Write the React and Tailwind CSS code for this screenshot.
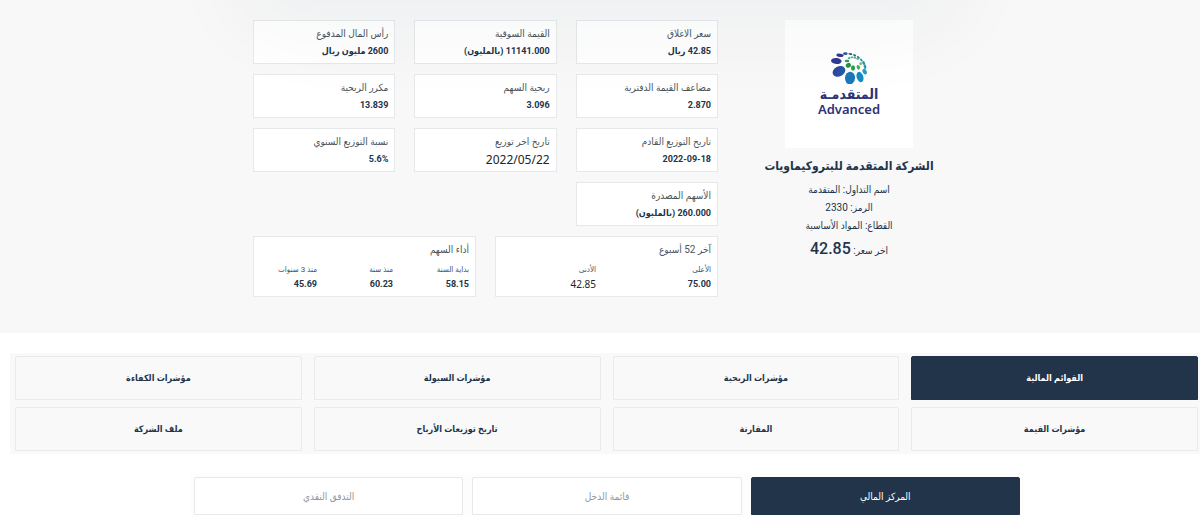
import { useState } from "react";
import clsx from "clsx";

const stats = [
  { label: "سعر الاغلاق", value: "42.85 ريال" },
  { label: "القيمة السوقية", value: "11141.000 (بالمليون)" },
  { label: "رأس المال المدفوع", value: "2600 مليون ريال" },
  { label: "مضاعف القيمة الدفترية", value: "2.870" },
  { label: "ربحية السهم", value: "3.096" },
  { label: "مكرر الربحية", value: "13.839" },
  { label: "تاريخ التوزيع القادم", value: "2022-09-18" },
  { label: "تاريخ اخر توزيع", value: "2022/05/22", plain: true },
  { label: "نسبة التوزيع السنوي", value: "5.6%" },
  { label: "الأسهم المصدرة", value: "260.000 (بالمليون)" },
];

const yearRange = [
  { label: "الأعلى", value: "75.00" },
  { label: "الأدنى", value: "42.85", plain: true },
];

const performance = [
  { label: "بداية السنة", value: "58.15" },
  { label: "منذ سنة", value: "60.23" },
  { label: "منذ 3 سنوات", value: "45.69" },
];

const sections = [
  "القوائم المالية",
  "مؤشرات الربحية",
  "مؤشرات السيولة",
  "مؤشرات الكفاءة",
  "مؤشرات القيمة",
  "المقارنة",
  "تاريخ توزيعات الأرباح",
  "ملف الشركة",
];

const statements = ["المركز المالي", "قائمة الدخل", "التدفق النقدي"];

function Logo() {
  return (
    <div className="flex size-32 flex-col items-center bg-white pt-8 text-[#2d3277]">
      <svg className="h-8 w-9" viewBox="0 0 108 96" aria-hidden="true">
        <defs>
          <linearGradient id="petal" x1="0" y1="0" x2="1" y2="1">
            <stop offset="0" stopColor="#2b3f98" />
            <stop offset="1" stopColor="#2263b0" />
          </linearGradient>
        </defs>
        <ellipse cx="27" cy="10" rx="11" ry="5" transform="rotate(5 27 10)" fill="#303a8e" />
        <ellipse cx="43" cy="5" rx="7" ry="4" fill="#2c5a94" />
        <ellipse cx="58" cy="6" rx="6" ry="3" transform="rotate(12 58 6)" fill="#23649a" />
        <ellipse cx="71" cy="10" rx="5" ry="3" transform="rotate(28 71 10)" fill="#22729b" />
        <ellipse cx="82" cy="16" rx="5" ry="3" transform="rotate(40 82 16)" fill="#25819f" />
        <ellipse cx="91" cy="24" rx="5" ry="3" transform="rotate(52 91 24)" fill="#298ca6" />
        <ellipse cx="98" cy="33" rx="6" ry="4" transform="rotate(65 98 33)" fill="#2b96ad" />
        <ellipse cx="102" cy="44" rx="7" ry="4" transform="rotate(80 102 44)" fill="#2b9ab8" />
        <ellipse cx="101" cy="59" rx="9" ry="6" transform="rotate(65 101 59)" fill="#279dc2" />
        <ellipse cx="16" cy="27" rx="16" ry="9" transform="rotate(4 16 27)" fill="#303a91" />
        <ellipse cx="24" cy="58" rx="20" ry="15" transform="rotate(-28 24 58)" fill="url(#petal)" />
        <ellipse cx="57" cy="78" rx="15" ry="19" transform="rotate(5 57 78)" fill="#1b78bb" />
        <ellipse cx="87" cy="75" rx="10" ry="16" transform="rotate(-18 87 75)" fill="#168bc1" />
        <ellipse cx="48" cy="27" rx="7" ry="4" fill="#249a62" />
        <ellipse cx="52" cy="40" rx="8" ry="7" transform="rotate(-25 52 40)" fill="#239347" />
        <ellipse cx="66" cy="48" rx="6" ry="8" fill="#249f48" />
        <ellipse cx="82" cy="46" rx="5" ry="7" transform="rotate(-18 82 46)" fill="#3eb158" />
        <ellipse cx="89" cy="35" rx="4" ry="4" fill="#68c064" />
        <path d="M51 20Q67 10 84 24" fill="none" stroke="#49af81" strokeWidth="5" strokeDasharray="7 2" />
      </svg>
      <div className="mt-0.5 text-[14px] leading-4 font-bold">المتقدمـة</div>
      <div className="font-['Noto_Sans','Open_Sans',sans-serif] text-[13px] leading-[14px] font-semibold" dir="ltr">
        Advanced
      </div>
    </div>
  );
}

function StatCard({ label, value, plain }) {
  return (
    <div className="h-11 border border-[#e7e8ea] bg-white px-1.5 pt-[5px]">
      <dt className="text-[10px] leading-4 text-[#4b535b]">{label}</dt>
      <dd
        className={clsx(
          "leading-[19px] whitespace-nowrap",
          plain
            ? "font-['Noto_Sans','Open_Sans',sans-serif] text-[12px] text-[#212529]"
            : "text-[9px] font-bold text-[#22344a]"
        )}
      >
        {value}
      </dd>
    </div>
  );
}

function GroupCard({ title, items, columns }) {
  return (
    <section className="h-[61px] border border-[#e7e8ea] bg-white px-1.5 pt-[5px]">
      <h2 className="text-[10px] leading-4 text-[#4b535b]">{title}</h2>
      <dl className={clsx("grid pt-1", columns)}>
        {items.map((item) => (
          <div key={item.label}>
            <dt className="text-[8px] leading-4 whitespace-nowrap text-[#4b535b]">{item.label}</dt>
            <dd
              className={clsx(
                "leading-3",
                item.plain
                  ? "font-['Noto_Sans','Open_Sans',sans-serif] text-[10px] text-[#212529]"
                  : "text-[9px] font-bold text-[#22344a]"
              )}
            >
              {item.value}
            </dd>
          </div>
        ))}
      </dl>
    </section>
  );
}

export default function App() {
  const [section, setSection] = useState(sections[0]);
  const [statement, setStatement] = useState(statements[0]);

  return (
    <div
      dir="rtl"
      className="overflow-x-hidden bg-white font-['Roboto','DejaVu_Sans_Condensed','DejaVu_Sans',sans-serif] text-[#22344a]"
    >
      <header className="relative overflow-hidden bg-[#f8f8f8] pt-5 pb-9">
        <div className="mx-auto flex max-w-[694px] gap-[33px]">
          <div className="flex w-[196px] shrink-0 flex-col items-center">
            <Logo />
            <h1 className="mt-2 text-[12px] leading-5 font-bold whitespace-nowrap">الشركة المتقدمة للبتروكيماويات</h1>
            <p className="mt-[5px] text-[10px] leading-[18px]">اسم التداول: المتقدمة</p>
            <p className="text-[10px] leading-[18px]">الرمز: 2330</p>
            <p className="text-[10px] leading-[18px]">القطاع: المواد الأساسية</p>
            <p className="mt-0.5 text-[10px] leading-6">
              اخر سعر: <span className="text-[16px] font-medium">42.85</span>
            </p>
          </div>
          <div className="min-w-0 flex-1">
            <dl className="grid grid-cols-3 gap-x-[19px] gap-y-2.5">
              {stats.map((stat) => (
                <StatCard key={stat.label} {...stat} />
              ))}
            </dl>
            <div className="mt-2.5 grid grid-cols-2 gap-[19px]">
              <GroupCard title="آخر 52 أسبوع" items={yearRange} columns="grid-cols-[115px_1fr]" />
              <GroupCard title="أداء السهم" items={performance} columns="grid-cols-[76px_76px_1fr]" />
            </div>
          </div>
        </div>
        <div className="pointer-events-none absolute inset-x-[24%] -top-24 h-16 rounded-3xl shadow-[0_10px_80px_60px_rgba(34,52,74,0.04)]" />
      </header>

      <main className="pt-5">
        <nav className="ml-2.5 grid grid-cols-4 gap-x-3 gap-y-[7px] bg-[#f9f9f9] py-[3px] pr-0.5 pl-[5px]">
          {sections.map((name) => (
            <button
              key={name}
              type="button"
              aria-pressed={name === section}
              onClick={() => setSection(name)}
              className={clsx(
                "h-11 rounded-t-xs border pt-0.5 text-[9px] font-bold",
                name === section ? "border-[#22344a] bg-[#22344a] text-white" : "border-[#e9eaeb] bg-[#f9f9f9]"
              )}
            >
              {name}
            </button>
          ))}
        </nav>
        <div className="mt-[19px] pl-3.5">
          <div className="mx-auto grid max-w-[834px] grid-cols-3 gap-[9px] bg-[#fdfdfd] px-1 pt-1">
            {statements.map((name) => (
              <button
                key={name}
                type="button"
                aria-pressed={name === statement}
                onClick={() => setStatement(name)}
                className={clsx(
                  "h-[38px] rounded-t-xs border text-[10px]",
                  name === statement
                    ? "border-[#22344a] bg-[#22344a] text-white"
                    : "border-[#e7e8ea] bg-white text-[#92979d]"
                )}
              >
                {name}
              </button>
            ))}
          </div>
        </div>
      </main>
    </div>
  );
}
